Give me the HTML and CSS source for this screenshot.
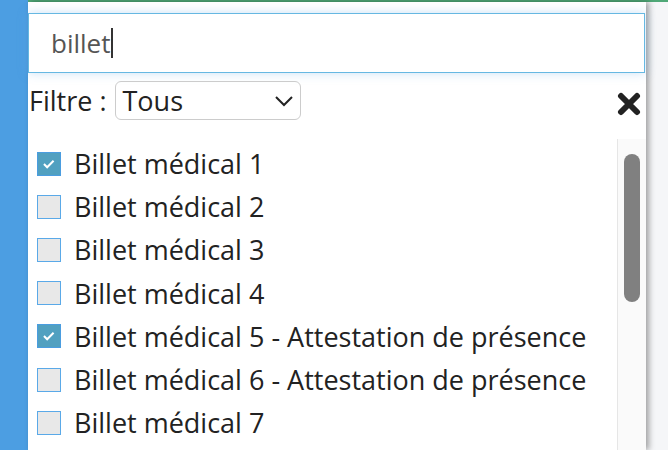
FILE: index.html
```html
<!DOCTYPE html>
<html lang="fr">
<head>
<meta charset="utf-8">
<link rel="stylesheet" href="styles.css">
</head>
<body>
<div class="app">
  <div class="sidebar"></div>
  <div class="main">
    <div class="panel">
      <div class="search"><span class="query">billet</span><span class="caret"></span></div>
      <div class="filter">
        <span class="filter-label">Filtre :</span>
        <div class="select"><span>Tous</span>
          <svg class="chev" viewBox="0 0 20 12" width="20" height="12"><path d="M2 2 L10 10 L18 2" fill="none" stroke="#222" stroke-width="2"/></svg>
        </div>
        <svg class="close" viewBox="0 0 24 24" width="26" height="24"><path d="M4 4 L20 20 M20 4 L4 20" stroke="#222" stroke-width="6" stroke-linecap="round"/></svg>
      </div>
      <div class="listwrap">
        <ul class="list">
          <li><span class="cb checked"><svg viewBox="0 0 24 24" width="22" height="22"><path d="M6.5 12 L10 15.5 L17 8.5" fill="none" stroke="#fff" stroke-width="2.2"/></svg></span>Billet médical 1</li>
          <li><span class="cb"></span>Billet médical 2</li>
          <li><span class="cb"></span>Billet médical 3</li>
          <li><span class="cb"></span>Billet médical 4</li>
          <li><span class="cb checked"><svg viewBox="0 0 24 24" width="22" height="22"><path d="M6.5 12 L10 15.5 L17 8.5" fill="none" stroke="#fff" stroke-width="2.2"/></svg></span>Billet médical 5 - Attestation de présence</li>
          <li><span class="cb"></span>Billet médical 6 - Attestation de présence</li>
          <li><span class="cb"></span>Billet médical 7</li>
        </ul>
        <div class="track"><div class="thumb"></div></div>
      </div>
    </div>
  </div>
</div>
</body>
</html>
```
FILE: styles.css
```css
* { box-sizing: border-box; }
html, body { margin: 0; padding: 0; }
body {
  width: 668px; height: 450px; overflow: hidden;
  background: #f5f6f8;
  font-family: "Open Sans", "Noto Sans", sans-serif;
  color: #222;
}
.app { display: flex; height: 450px; }
.sidebar { width: 28px; background: #4c9ee2; flex: none; }
.main { flex: 1; border-top: 2px solid #4fa877; display: flex; }
.panel {
  width: 618px; background: #fff; height: 448px;
  box-shadow: 3px 0 6px rgba(0,0,0,0.35);
  display: flex; flex-direction: column;
  position: relative;
}
.search {
  margin-top: 11px; height: 60px; width: 617px; flex: none;
  border: 1px solid #66b8e2;
  box-shadow: 0 0 10px rgba(102,170,230,0.35);
  padding-left: 22px;
  display: flex; align-items: center;
  font-size: 26px; color: #555;
  background: #fff;
}
.caret { display: inline-block; width: 1.5px; height: 30px; background: #333; margin-left: 1px; }
.filter {
  margin-top: 8px; height: 39px; flex: none;
  display: flex; align-items: center;
  padding-left: 1px;
}
.filter-label { font-size: 27px; }
.select {
  margin-left: 8px; width: 186px; height: 39px;
  border: 1px solid #ccc; border-radius: 6px;
  display: flex; align-items: center; justify-content: space-between;
  padding: 0 4px 0 7px;
  font-size: 27px;
}
.chev { margin-right: 2px; }
.close { margin-left: auto; margin-right: 4px; margin-top: 6px; }
.listwrap { flex: 1; display: flex; margin-top: 19px; min-height: 0; }
.list {
  list-style: none; margin: 0; padding: 3px 0 0 9px; flex: 1;
  overflow: hidden;
}
.list li {
  height: 43.2px; display: flex; align-items: center;
  font-size: 27px; white-space: nowrap;
}
.cb {
  width: 24px; height: 24px; flex: none;
  border: 1px solid #5aa9e8; background: #e8e8e8;
  margin-right: 13px;
  display: flex; align-items: center; justify-content: center;
}
.cb.checked { background: #51a0c0; border-color: #4a9de0; }
.track {
  width: 29px; flex: none;
  background: #fafafa; border-left: 1px solid #e6e6e6;
  padding: 15px 0 0 6px;
}
.thumb { width: 16px; height: 148px; border-radius: 8px; background: #808080; }
```
